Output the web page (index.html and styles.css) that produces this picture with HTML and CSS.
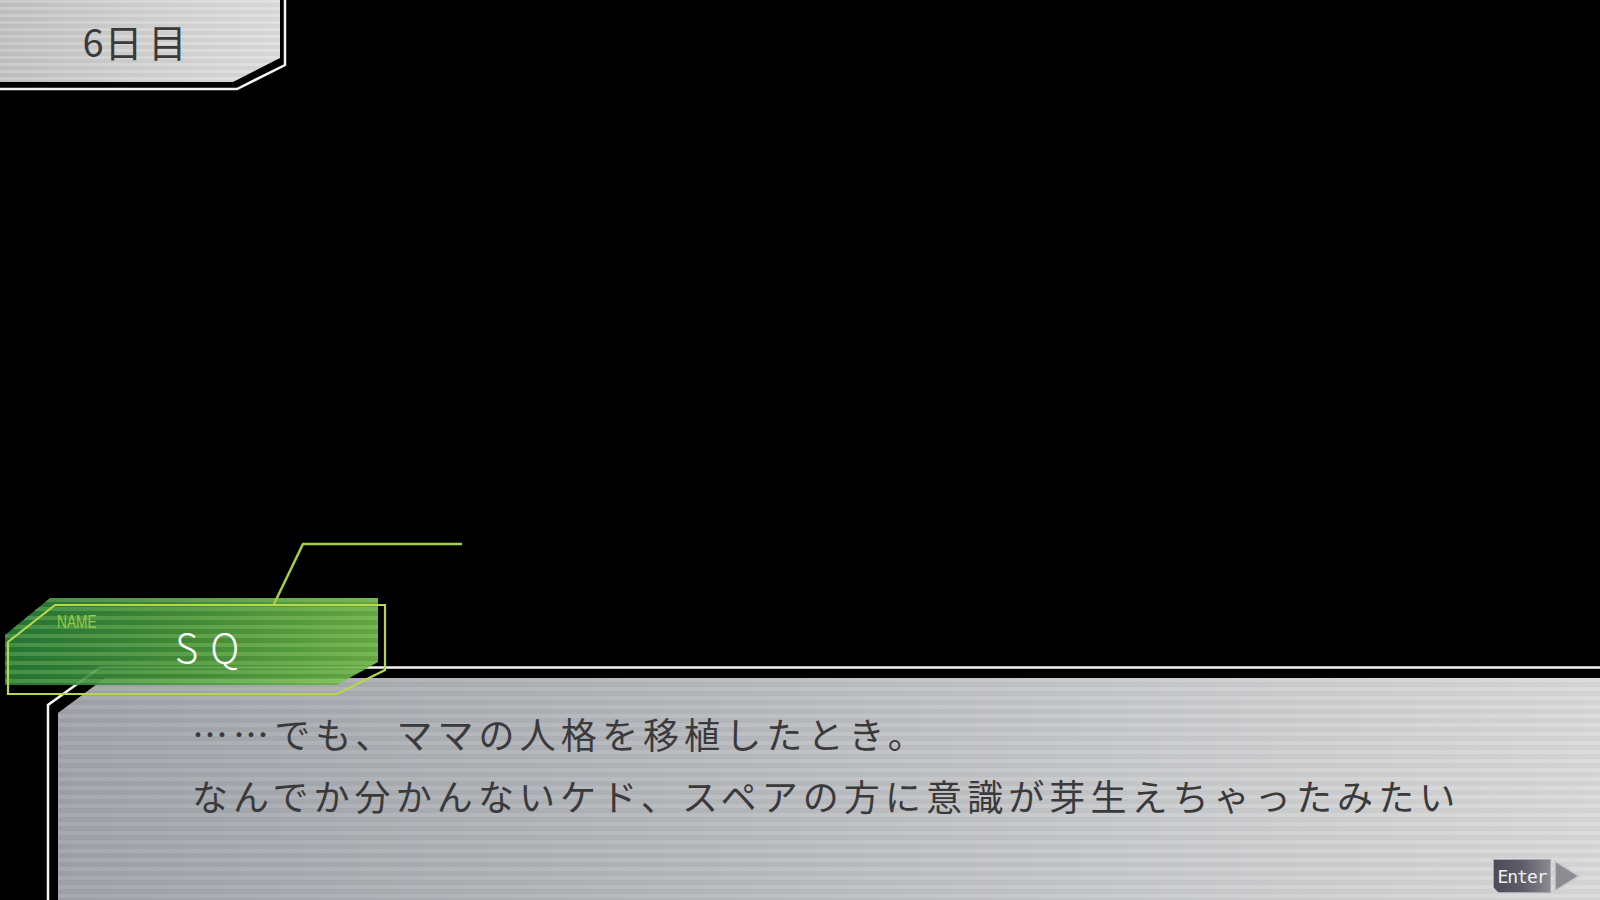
FILE: index.html
```html
<!DOCTYPE html>
<html lang="ja">
<head>
<meta charset="utf-8">
<title>6日目</title>
<link rel="stylesheet" href="styles.css">
</head>
<body>
<div class="screen">
  <header class="day">
    <svg class="day-frame" width="290" height="92" viewBox="0 0 290 92">
      <polyline points="285,0 285,65 237,89 0,89" fill="none" stroke="#f2f2f2" stroke-width="2.5"/>
    </svg>
    <div class="day-fill"><span class="day-text">6<span class="day-gap">日</span>目</span></div>
  </header>

  <section class="bottom">
    <div class="dialog">
      <svg class="dialog-frame" width="1600" height="236" viewBox="0 0 1600 236">
        <polyline points="1600,3.5 100,3.5 48,41 48,240" fill="none" stroke="#f4f4f4" stroke-width="2.5"/>
      </svg>
      <div class="dialog-panel">
        <p class="line">……でも、ママの人格を移植したとき。</p>
        <p class="line">なんでか分かんないケド、スペアの方に意識が芽生えちゃったみたい</p>
      </div>
      <div class="enter">
        <span class="enter-key">Enter</span>
        <svg class="enter-arrow" width="26" height="32" viewBox="0 0 26 32">
          <polygon points="1,1 25,16 1,31" fill="#8c8d92" stroke="#c9cacd" stroke-width="1.5"/>
        </svg>
      </div>
    </div>

    <div class="nameplate">
      <div class="name-fill">
        <span class="name-label">NAME</span>
        <span class="name-text">SQ</span>
      </div>
      <svg class="name-lines" width="470" height="170" viewBox="0 0 470 170">
        <polyline points="274,74 303,14 462,14" fill="none" stroke="#a6cf45" stroke-width="2.5"/>
        <polygon points="55,75 385,75 385,140 337,164 8,164 8,112" fill="none" stroke="#b5d84a" stroke-width="2.2"/>
      </svg>
    </div>
  </section>
</div>
</body>
</html>
```

FILE: styles.css
```css
* { box-sizing: border-box; }
html, body {
  margin: 0;
  padding: 0;
  background: #000;
}
body {
  width: 1600px;
  height: 900px;
  overflow: hidden;
  font-family: "Noto Sans CJK JP", "Noto Sans", sans-serif;
}
.screen {
  width: 1600px;
  height: 900px;
  display: flex;
  flex-direction: column;
  background: #000;
}

/* ---------- day panel ---------- */
.day {
  position: relative;
  width: 290px;
  height: 92px;
  flex: none;
}
.day-frame {
  position: absolute;
  left: 0;
  top: 0;
}
.day-fill {
  width: 280px;
  height: 82px;
  clip-path: polygon(0 0, 280px 0, 280px 58px, 233px 82px, 0 82px);
  background:
    repeating-linear-gradient(180deg, rgba(255,255,255,0.10) 0 3px, rgba(0,0,0,0.035) 3px 7px),
    linear-gradient(90deg, #c4c4c4 0%, #d4d4d4 55%, #dedede 100%);
  display: flex;
  align-items: center;
  justify-content: center;
  padding-right: 10px;
}
.day-text {
  font-family: "Noto Sans CJK JP", sans-serif;
  font-weight: 400;
  font-size: 38px;
  color: #3a3a3a;
  line-height: 1;
  letter-spacing: 1px;
}
.day-gap {
  letter-spacing: 6px;
}

/* ---------- bottom area ---------- */
.bottom {
  position: relative;
  margin-top: auto;
  height: 370px;
  flex: none;
}
.dialog {
  position: relative;
  display: flow-root;
  margin-top: 134px;
  height: 236px;
  width: 1600px;
}
.dialog-frame {
  position: absolute;
  left: 0;
  top: 0;
}
.dialog-panel {
  margin-left: 58px;
  margin-top: 14px;
  height: 222px;
  clip-path: polygon(47px 0, 100% 0, 100% 100%, 0 100%, 0 35px);
  background:
    repeating-linear-gradient(180deg, rgba(255,255,255,0.06) 0 4px, rgba(0,0,0,0.03) 4px 9px),
    linear-gradient(90deg, #a1a5ab 0%, #b3b6ba 35%, #c9cacc 70%, #dadada 100%);
  padding: 24px 0 0 134px;
}
.line {
  margin: 0;
  font-size: 36px;
  line-height: 62px;
  letter-spacing: 5.1px;
  color: #3a3a3c;
  white-space: nowrap;
}

.enter {
  position: absolute;
  left: 1493px;
  top: 195px;
  display: flex;
  align-items: center;
  gap: 3px;
}
.enter-key {
  display: block;
  width: 58px;
  height: 34px;
  line-height: 33px;
  text-align: center;
  font-family: "DejaVu Sans Mono", "Liberation Mono", monospace;
  font-size: 18px;
  letter-spacing: -1px;
  color: #f2f2f2;
  background: linear-gradient(90deg, #4c4b58 0%, #5d5c68 50%, #8b8a92 100%);
  border: 1px solid #a8a8ae;
  clip-path: polygon(0 0, 100% 0, 100% 100%, 6px 100%, 0 calc(100% - 6px));
}

/* ---------- nameplate ---------- */
.nameplate {
  position: absolute;
  left: 0;
  top: 0;
  width: 470px;
  height: 170px;
}
.name-lines {
  position: absolute;
  left: 0;
  top: 0;
}
.name-fill {
  position: relative;
  margin-left: 5px;
  margin-top: 68px;
  width: 373px;
  height: 87px;
  clip-path: polygon(45px 0, 373px 0, 373px 64px, 332px 87px, 0 87px, 0 37px);
  background:
    repeating-linear-gradient(180deg, rgba(190,240,140,0.22) 0 4px, rgba(0,0,0,0) 4px 9px),
    linear-gradient(90deg, rgba(40,128,58,0.9) 0%, rgba(70,150,60,0.9) 45%, rgba(112,184,74,0.9) 100%);
}
.name-label {
  position: absolute;
  left: 52px;
  top: 14px;
  font-family: "Liberation Sans", sans-serif;
  font-size: 19px;
  transform: scaleX(0.72);
  transform-origin: left top;
  color: #95cc45;
  line-height: 1;
}
.name-text {
  position: absolute;
  left: 170px;
  top: 28px;
  font-family: "Noto Sans CJK JP", sans-serif;
  font-weight: 300;
  font-size: 40px;
  letter-spacing: 12px;
  line-height: 1;
  color: #fff;
}
```
